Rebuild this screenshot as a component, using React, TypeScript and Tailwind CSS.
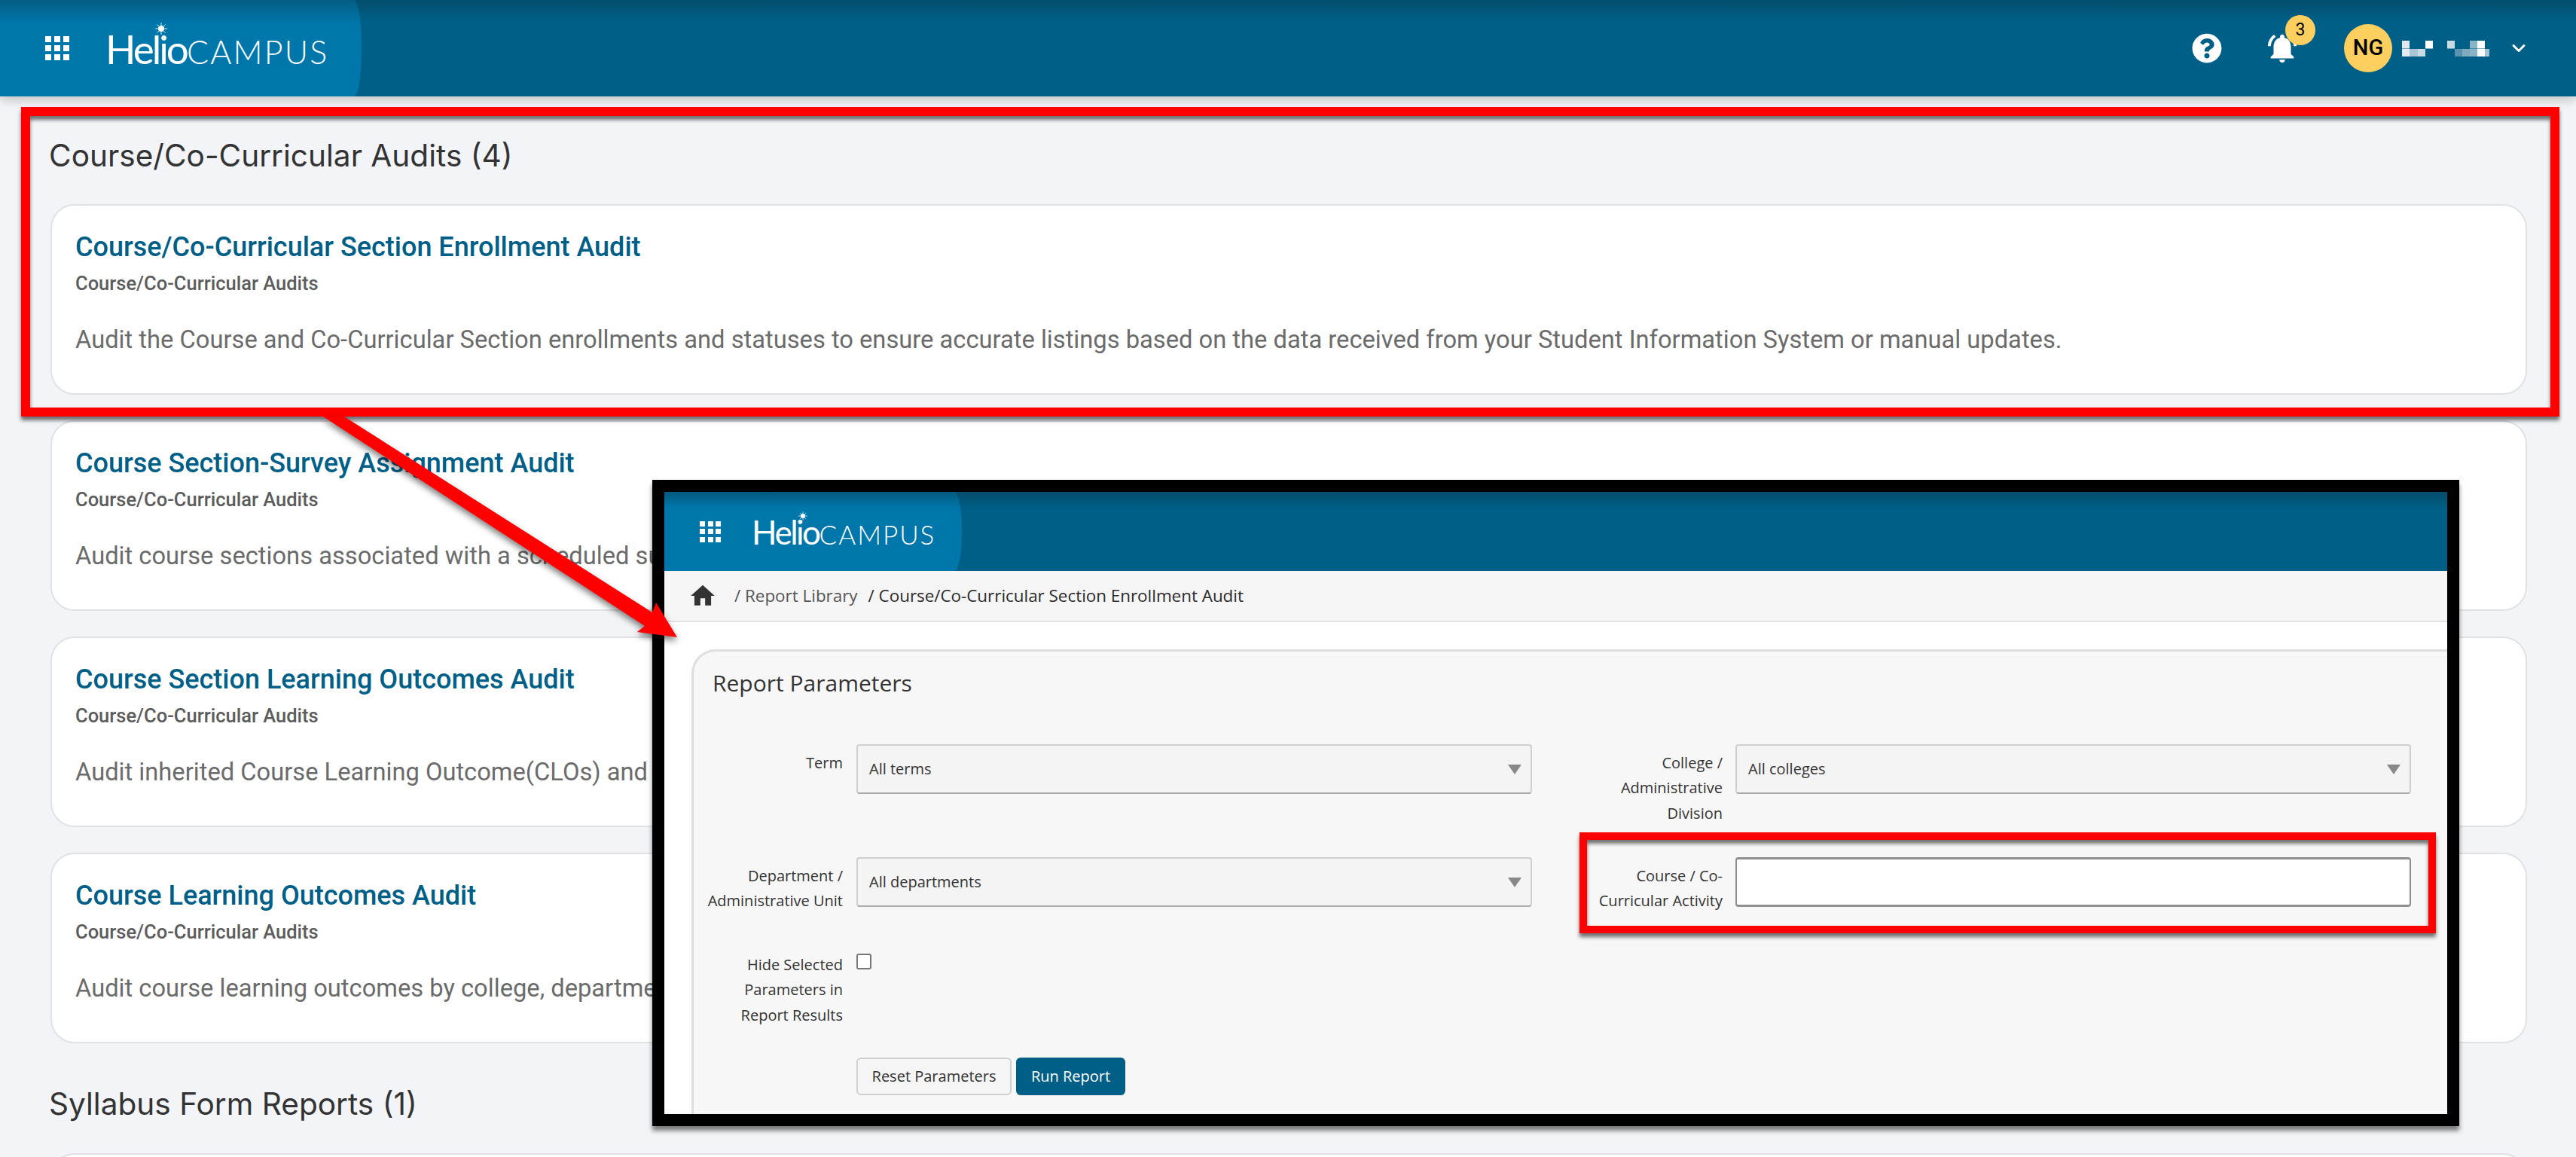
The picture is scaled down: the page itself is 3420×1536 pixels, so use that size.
import { FaQuestionCircle } from "react-icons/fa"
import { FiChevronDown } from "react-icons/fi"
import { MdHome, MdNotificationsActive } from "react-icons/md"

const cards = [
  {
    title: "Course/Co-Curricular Section Enrollment Audit",
    desc: "Audit the Course and Co-Curricular Section enrollments and statuses to ensure accurate listings based on the data received from your Student Information System or manual updates.",
  },
  {
    title: "Course Section-Survey Assignment Audit",
    desc: "Audit course sections associated with a scheduled survey.",
  },
  {
    title: "Course Section Learning Outcomes Audit",
    desc: "Audit inherited Course Learning Outcome(CLOs) and",
  },
  {
    title: "Course Learning Outcomes Audit",
    desc: "Audit course learning outcomes by college, department",
  },
]

const pixels = [
  [0, 0, 10, "#dfe8ef"],
  [31, 0, 10, "#ffffff"],
  [0, 11, 10, "#e4ecf1"],
  [10, 11, 11, "#a9c5d3"],
  [21, 11, 10, "#c8dbe3"],
  [60, 0, 10, "#c8dbe3"],
  [90, 0, 10, "#88b4c6"],
  [100, 0, 10, "#ffffff"],
  [70, 11, 10, "#5a93ad"],
  [80, 11, 10, "#7fabc0"],
  [90, 11, 10, "#88b4c6"],
  [100, 11, 10, "#ffffff"],
  [110, 11, 6, "#9fc3d2"],
] as const

function GridIcon({ small }: { small?: boolean }) {
  return (
    <div className={small ? "grid grid-cols-3 gap-[3.5px]" : "grid grid-cols-3 gap-[4px]"}>
      {Array.from({ length: 9 }).map((_, i) => (
        <span key={i} className={small ? "w-[7px] h-[7px] bg-white" : "w-[8px] h-[8px] bg-white"} />
      ))}
    </div>
  )
}

function Spark({ className }: { className: string }) {
  return (
    <svg viewBox="0 0 16 16" className={className}>
      <g stroke="#cfeaf7" strokeWidth="1">
        <path d="M8 0v16M0 8h16M2.5 2.5l11 11M13.5 2.5l-11 11" />
      </g>
      <circle cx="8" cy="8" r="4" fill="#fff" />
    </svg>
  )
}

function Logo({ small }: { small?: boolean }) {
  return (
    <div className="relative flex items-baseline text-white font-['Lato',sans-serif] leading-none">
      <span className={small ? "text-[44px] tracking-[-2.5px]" : "text-[53px] tracking-[-3px]"}>Helio</span>
      <span className={small ? "text-[35px] font-light tracking-[2px]" : "text-[43px] font-light tracking-[2.2px]"}>
        CAMPUS
      </span>
      <Spark className={small ? "absolute left-[62px] top-[-5px] w-[12px] h-[12px]" : "absolute left-[66px] top-[-8px] w-[16px] h-[16px]"} />
    </div>
  )
}

function Card({ title, desc }: { title: string; desc: string }) {
  return (
    <div className="h-[253px] rounded-[32px] border-2 border-[#e1e2e6] bg-white pl-[31px] pt-[33px] font-['Roboto',sans-serif]">
      <h3 className="text-[36px] leading-[44px] font-medium text-[#005f87]">{title}</h3>
      <p className="mt-[10px] text-[25.5px] leading-[32px] font-medium text-[#5c5c5c]">Course/Co-Curricular Audits</p>
      <p className="mt-[37px] text-[32.7px] leading-[44px] text-[#6b6b6b]">{desc}</p>
    </div>
  )
}

function SelectBox({ value }: { value: string }) {
  return (
    <div className="flex h-[66px] w-[897px] items-center justify-between rounded-[4px] border-2 border-[#cfcfcf] border-b-[#aaa] bg-[#f4f4f4] pl-[15px] pr-[12px] text-[20px] text-[#333]">
      <span>{value}</span>
      <svg viewBox="0 0 18 13" className="w-[18px] h-[13px]">
        <polygon points="0,0 18,0 9,13" fill="#888" />
      </svg>
    </div>
  )
}

function Label({ children }: { children: React.ReactNode }) {
  return <div className="w-[185px] pt-[8px] text-right text-[20px] leading-[33.3px] text-[#333]">{children}</div>
}

function ReportScreenshot() {
  return (
    <div className="absolute left-[866px] top-[637px] flex h-[858px] w-[2399px] flex-col overflow-hidden border-16 border-black bg-white font-['Open_Sans',sans-serif] shadow-[0_6px_6px_rgba(0,0,0,0.5)]">
      <div className="flex h-[105px] shrink-0 bg-[linear-gradient(180deg,#044d6c,#005f87_22px)]">
        <div className="flex w-[395px] items-center gap-[41px] rounded-[0_10px_10px_0/0_52px_52px_0] bg-[linear-gradient(180deg,#05597e,#0077ab_22px)] pl-[47px]">
          <GridIcon small />
          <Logo small />
        </div>
      </div>
      <div className="flex h-[68px] shrink-0 items-center border-b-2 border-[#e2e2e2] bg-[#f5f5f5] pl-[32px] text-[22.4px] text-[#555]">
        <MdHome className="h-[38px] w-[38px] text-[#333]" />
        <span className="ml-[23px]">/ Report Library</span>
        <span className="ml-[14px] text-[#2b2b2b]">/ Course/Co-Curricular Section Enrollment Audit</span>
      </div>
      <div className="flex-1 pl-[36px] pt-[36px]">
        <div className="h-full rounded-tl-[32px] border-l-[3px] border-t-[3px] border-[#dedede] bg-[#f7f7f7] pl-[13px] pt-[22px]">
          <h2 className="ml-[12px] text-[30px] leading-[40px] text-[#333]">Report Parameters</h2>
          <div className="mt-[61px] flex h-[150px] text-[#333]">
            <Label>Term</Label>
            <div className="ml-[18px]">
              <SelectBox value="All terms" />
            </div>
            <div className="ml-[68px]">
              <Label>College / Administrative Division</Label>
            </div>
            <div className="ml-[17px]">
              <SelectBox value="All colleges" />
            </div>
          </div>
          <div className="flex h-[118px]">
            <Label>Department / Administrative Unit</Label>
            <div className="ml-[18px]">
              <SelectBox value="All departments" />
            </div>
            <div className="ml-[68px]">
              <Label>Course / Co-Curricular Activity</Label>
            </div>
            <div className="ml-[17px] h-[66px] w-[897px] rounded-[4px] border-x-2 border-y-[3px] border-[#8f8f8f] bg-white" />
          </div>
          <div className="flex h-[148px]">
            <Label>
              Hide Selected
              <br />
              Parameters in
              <br />
              Report Results
            </Label>
            <div className="ml-[18px] mt-[10px] h-[21px] w-[20px] rounded-[3px] border-2 border-[#777] bg-white" />
          </div>
          <div className="ml-[203px] flex gap-[6px] text-[20px]">
            <button className="h-[50px] w-[206px] rounded-[6px] border-2 border-[#d0d0d0] bg-[#f5f5f5] text-[#333]">
              Reset Parameters
            </button>
            <button className="h-[50px] w-[145px] rounded-[6px] bg-[#005f87] text-white">Run Report</button>
          </div>
        </div>
      </div>
    </div>
  )
}

export default function App() {
  return (
    <div className="relative h-[1536px] overflow-hidden bg-[#f2f4f8]">
      <header className="relative flex h-[128px] items-center justify-between bg-[linear-gradient(180deg,#044d6c,#005f87_28px)] shadow-[0_4px_14px_rgba(0,0,0,0.22)]">
        <div className="flex h-full w-[480px] items-center gap-[48px] rounded-[0_10px_10px_0/0_64px_64px_0] bg-[linear-gradient(180deg,#055d84,#0077ab_32px)] pl-[60px]">
          <GridIcon />
          <Logo />
        </div>
        <div className="flex items-center font-['Roboto',sans-serif] text-white">
          <FaQuestionCircle className="h-[40px] w-[40px]" />
          <div className="relative ml-[57px] w-[44px]">
            <MdNotificationsActive className="h-[46px] w-[46px]" />
            <span className="absolute left-[27px] top-[-21px] flex h-[40px] w-[40px] items-center justify-center rounded-full bg-[#fdcf5e] text-[23px] text-black">
              3
            </span>
          </div>
          <div className="ml-[61px] flex h-[64px] w-[64px] items-center justify-center rounded-full bg-[#fdcf5e] text-[29px] font-medium text-black">
            NG
          </div>
          <svg viewBox="0 0 116 21" className="ml-[13px] h-[21px] w-[116px]">
            {pixels.map(([x, y, w, fill], i) => (
              <rect key={i} x={x} y={y} width={w} height={10.5} fill={fill} />
            ))}
          </svg>
          <FiChevronDown className="ml-[25px] mr-[62px] h-[28px] w-[28px]" strokeWidth={2.5} />
        </div>
      </header>

      <main className="pl-[67px] pr-[65px]">
        <h2 className="-ml-[2px] pt-[55px] text-[40.6px] leading-[48px] text-[#333] font-['Inter',sans-serif]">
          Course/Co-Curricular Audits (4)
        </h2>
        <div className="mt-[40px] flex flex-col gap-[34px]">
          {cards.map((c) => (
            <Card key={c.title} title={c.title} desc={c.desc} />
          ))}
        </div>
        <h2 className="-ml-[2px] mt-[57px] text-[40.6px] leading-[48px] text-[#333] font-['Inter',sans-serif]">
          Syllabus Form Reports (1)
        </h2>
        <div className="mt-[41px] h-[253px] rounded-[32px] border-2 border-[#e1e2e6] bg-white" />
      </main>

      {/* annotations drawn over the page */}
      <div className="absolute left-[28px] top-[142px] h-[411px] w-[3370px] border-12 border-[#ff0000] shadow-[0_5px_5px_rgba(0,0,0,0.55),inset_0_5px_5px_rgba(0,0,0,0.55)]" />
      <ReportScreenshot />
      <div className="absolute left-[2097px] top-[1105px] h-[134px] w-[1137px] border-10 border-[#ff0000] shadow-[0_5px_5px_rgba(0,0,0,0.55),inset_0_5px_5px_rgba(0,0,0,0.55)]" />
      <svg className="absolute left-0 top-0 h-[1536px] w-[3420px] drop-shadow-[0_5px_4px_rgba(0,0,0,0.5)]" viewBox="0 0 3420 1536">
        <polygon points="429,553 457,553 866,813 871,800 899,846 846,839 856,831" fill="#ff0000" />
      </svg>
    </div>
  )
}
